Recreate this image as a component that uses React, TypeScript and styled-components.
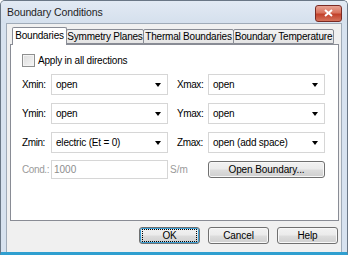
import React from 'react';
import styled, { createGlobalStyle } from 'styled-components';

const GlobalStyle = createGlobalStyle`
  html, body {
    margin: 0;
    padding: 0;
    background: #ffffff;
  }
  body {
    font-family: 'Liberation Sans', Arial, sans-serif;
  }
`;

const Window = styled.div`
  width: 348px;
  height: 255px;
  box-sizing: border-box;
  display: flex;
  flex-direction: column;
  background: #d7e2ef;
  border-left: 1px solid #6a7786;
  border-right: 1px solid #6a7786;
  border-top: 1px solid #6a7786;
  border-bottom: 3px solid #2f9fd0;
  border-radius: 5px 5px 0 0;
  overflow: hidden;
`;

const TitleBar = styled.div`
  height: 22px;
  flex-shrink: 0;
  display: flex;
  align-items: center;
  justify-content: space-between;
  padding: 0 5px 0 6px;
  background: linear-gradient(#e2eaf4, #d5e0ed);
`;

const Title = styled.span`
  font-family: 'Liberation Sans', Arial, sans-serif;
  font-size: 10.5px;
  letter-spacing: -0.1px;
  color: #1e1e1e;
`;

const CloseButton = styled.div`
  width: 25px;
  height: 15px;
  margin-top: 2px;
  border-radius: 3px;
  border: 1px solid #7a2a23;
  background: linear-gradient(#e8a293 0%, #d9745f 45%, #c2412b 55%, #d5735c 100%);
  display: flex;
  align-items: center;
  justify-content: center;
`;

const Client = styled.div`
  flex: 1;
  margin: 0 5px;
  border: 1px solid #a0abb8;
  border-bottom: none;
  background: #f0f0f0;
  display: flex;
  flex-direction: column;
  padding: 2px 2px 0 3px;
`;

const TabRow = styled.div`
  display: flex;
  align-items: flex-end;
  height: 18px;
  padding-left: 3px;
  position: relative;
  z-index: 1;
`;

const Tab = styled.div<{ $active?: boolean; $width: number }>`
  box-sizing: border-box;
  flex-shrink: 0;
  width: ${p => p.$width}px;
  height: ${p => (p.$active ? '18px' : '15px')};
  margin-bottom: ${p => (p.$active ? '-1px' : '0')};
  margin-left: -1px;
  display: flex;
  align-items: center;
  justify-content: center;
  white-space: nowrap;
  font-size: 10px;
  letter-spacing: -0.2px;
  color: #000;
  border: 1px solid #898c95;
  border-bottom: ${p => (p.$active ? 'none' : '1px solid #898c95')};
  border-radius: 2px 2px 0 0;
  background: ${p => (p.$active ? '#ffffff' : 'linear-gradient(#f3f3f3, #e4e4e4)')};
  padding-bottom: ${p => (p.$active ? '2px' : '0')};
`;

const Panel = styled.div`
  box-sizing: border-box;
  width: 329px;
  height: 177px;
  border: 1px solid #898c95;
  background: #ffffff;
  padding: 9px 0 0 11px;
  display: flex;
  flex-direction: column;
`;

const CheckRow = styled.label`
  display: flex;
  align-items: center;
  gap: 3px;
  font-size: 10px;
  letter-spacing: -0.2px;
  color: #000;
  height: 13px;
`;

const CheckBox = styled.span`
  box-sizing: border-box;
  width: 13px;
  height: 13px;
  border: 1px solid #8e8f8f;
  background: linear-gradient(135deg, #dcdcdc, #f6f6f6);
  box-shadow: inset 0 0 0 1px #f4f4f4;
`;

const FieldGrid = styled.div`
  display: grid;
  grid-template-columns: 29px 117px 9px 31px 117px;
  grid-auto-rows: 21px;
  row-gap: 8px;
  margin-top: 7px;
  align-items: center;
`;

const FieldLabel = styled.span<{ $disabled?: boolean }>`
  font-size: 10px;
  color: ${p => (p.$disabled ? '#9a9a9a' : '#000')};
  letter-spacing: -0.4px;
  white-space: nowrap;
`;

const Select = styled.div`
  box-sizing: border-box;
  height: 21px;
  border: 1px solid #d6d6d6;
  background: #ffffff;
  display: flex;
  align-items: center;
  justify-content: space-between;
  padding: 0 6px 0 4px;
  font-size: 10px;
  letter-spacing: -0.2px;
  color: #000;
  white-space: nowrap;
`;

const Arrow = styled.span`
  width: 0;
  height: 0;
  border-left: 3.5px solid transparent;
  border-right: 3.5px solid transparent;
  border-top: 4px solid #000;
  margin-top: 1px;
`;

const TextInput = styled.div`
  box-sizing: border-box;
  height: 19px;
  margin-top: -4px;
  border: 1px solid #d6d6d6;
  background: #ffffff;
  display: flex;
  align-items: center;
  padding: 0 2px;
  font-size: 10px;
  color: #8d8d8d;
`;

const Unit = styled.span`
  font-size: 10px;
  color: #9a9a9a;
  margin-top: -4px;
  margin-left: 2px;
  grid-column: 3 / 5;
`;

const Button = styled.div<{ $focused?: boolean }>`
  box-sizing: border-box;
  height: 17px;
  border: 1px solid #707070;
  border-radius: 3px;
  background: linear-gradient(#f2f2f2 0%, #ebebeb 48%, #dddddd 52%, #cfcfcf 100%);
  display: flex;
  align-items: center;
  justify-content: center;
  font-size: 10px;
  letter-spacing: -0.1px;
  color: #000;
  white-space: nowrap;
  box-shadow: ${p => (p.$focused ? 'inset 0 0 0 1px #3c9fd4' : 'inset 0 0 0 1px #f8f8f8')};
`;

const OpenButton = styled(Button)`
  margin-top: -5px;
`;

const Footer = styled.div`
  display: flex;
  justify-content: flex-end;
  gap: 8px;
  padding: 6px 1px 0 0;
`;

const FooterButton = styled(Button)`
  width: 61px;
`;

const FocusText = styled.span`
  display: block;
  width: 53px;
  height: 11px;
  line-height: 11px;
  text-align: center;
  outline: 1px dotted #000;
`;

const rows: [string, string, string, string][] = [
  ['Xmin:', 'open', 'Xmax:', 'open'],
  ['Ymin:', 'open', 'Ymax:', 'open'],
  ['Zmin:', 'electric (Et = 0)', 'Zmax:', 'open (add space)'],
];

const tabs: [string, number][] = [
  ['Boundaries', 55],
  ['Symmetry Planes', 78],
  ['Thermal Boundaries', 91],
  ['Boundary Temperature', 101],
];

export default function App() {
  return (
    <>
      <GlobalStyle />
      <Window>
        <TitleBar>
          <Title>Boundary Conditions</Title>
          <CloseButton>
            <svg width="9" height="8" viewBox="0 0 9 8">
              <path d="M1 1 L8 7 M8 1 L1 7" stroke="#ffffff" strokeWidth="2" />
            </svg>
          </CloseButton>
        </TitleBar>
        <Client>
          <TabRow>
            {tabs.map(([t, w], i) => (
              <Tab key={t} $active={i === 0} $width={w}>
                {t}
              </Tab>
            ))}
          </TabRow>
          <Panel>
            <CheckRow>
              <CheckBox />
              Apply in all directions
            </CheckRow>
            <FieldGrid>
              {rows.map(r => (
                <React.Fragment key={r[0]}>
                  <FieldLabel>{r[0]}</FieldLabel>
                  <Select>
                    {r[1]}
                    <Arrow />
                  </Select>
                  <span />
                  <FieldLabel>{r[2]}</FieldLabel>
                  <Select>
                    {r[3]}
                    <Arrow />
                  </Select>
                </React.Fragment>
              ))}
              <FieldLabel $disabled style={{ marginTop: -4 }}>
                Cond.:
              </FieldLabel>
              <TextInput>1000</TextInput>
              <Unit>S/m</Unit>
              <OpenButton>Open Boundary...</OpenButton>
            </FieldGrid>
          </Panel>
          <Footer>
            <FooterButton $focused>
              <FocusText>OK</FocusText>
            </FooterButton>
            <FooterButton>Cancel</FooterButton>
            <FooterButton>Help</FooterButton>
          </Footer>
        </Client>
      </Window>
    </>
  );
}
